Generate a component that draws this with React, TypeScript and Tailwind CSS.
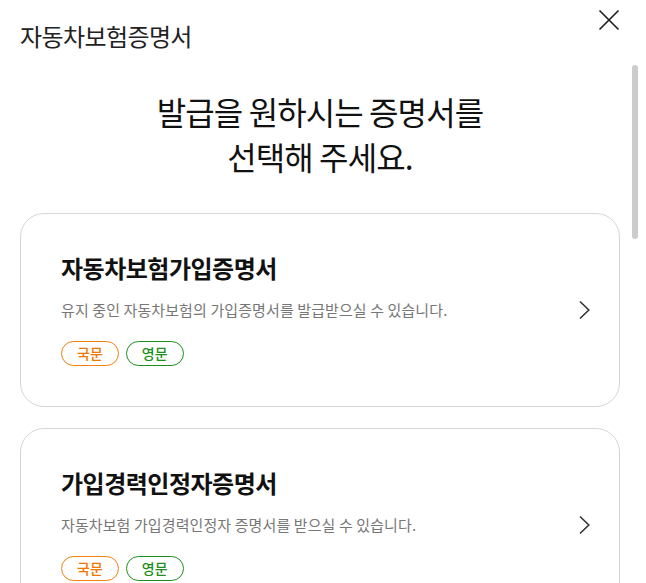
const FONT = { fontFamily: '"Noto Sans CJK KR", "Noto Sans", sans-serif' };

type Cert = {
  title: string;
  desc: string;
};

const certs: Cert[] = [
  { title: "자동차보험가입증명서", desc: "유지 중인 자동차보험의 가입증명서를 발급받으실 수 있습니다." },
  { title: "가입경력인정자증명서", desc: "자동차보험 가입경력인정자 증명서를 받으실 수 있습니다." },
];

function Chevron() {
  return (
    <svg width="11" height="20" viewBox="0 0 11 20" fill="none" aria-hidden="true">
      <path d="M1 1.5 L9.8 10 L1 18.5" stroke="#333" strokeWidth="1.6" />
    </svg>
  );
}

function CertCard({ cert }: { cert: Cert }) {
  return (
    <button
      type="button"
      className="flex h-[194px] w-full shrink-0 items-center rounded-[24px] border border-[#d6d6d6] bg-white pb-[3px] pl-10 pr-[29px] text-left"
    >
      <div className="flex flex-1 flex-col">
        <div className="text-[24px] font-bold leading-[32px] tracking-[-0.5px] text-[#111]">{cert.title}</div>
        <div className="mt-[15px] text-[15px] leading-[22px] tracking-[0.1px] text-[#777]">{cert.desc}</div>
        <div className="mt-[20px] flex gap-[7px]">
          <span className="flex h-[25px] items-center rounded-full border border-[#f08010] px-[15px] text-[14px] font-medium text-[#ee7700]">
            국문
          </span>
          <span className="flex h-[25px] items-center rounded-full border border-[#1d8f1d] px-[15px] text-[14px] font-medium text-[#1d8f1d]">
            영문
          </span>
        </div>
      </div>
      <div className="mt-[3px]">
        <Chevron />
      </div>
    </button>
  );
}

export default function App() {
  return (
    <div style={FONT} className="relative flex h-[583px] w-full flex-col overflow-hidden bg-white">
      <header className="flex h-[62px] shrink-0 items-start justify-between pl-5 pr-[26px]">
        <h1 className="mt-[20px] text-[24px] leading-[32px] tracking-[-0.6px] text-[#222]">자동차보험증명서</h1>
        <button type="button" aria-label="닫기" className="mt-[9px]">
          <svg width="22" height="22" viewBox="0 0 22 22" fill="none">
            <path d="M1.5 1.5 L20.5 20.5 M20.5 1.5 L1.5 20.5" stroke="#222" strokeWidth="1.7" />
          </svg>
        </button>
      </header>

      <main className="flex flex-col pl-5 pr-[26px]">
        <h2 className="mt-[27px] text-center text-[32px] leading-[45px] tracking-[-0.9px] text-[#111]">
          발급을 원하시는 증명서를
          <br />
          선택해 주세요.
        </h2>
        <div className="mt-[34px] flex flex-col gap-[21px]">
          {certs.map((c) => (
            <CertCard key={c.title} cert={c} />
          ))}
        </div>
      </main>

      <div className="absolute right-[8px] top-[65px] h-[174px] w-[6px] rounded-full bg-[#cccccc]" />
    </div>
  );
}
